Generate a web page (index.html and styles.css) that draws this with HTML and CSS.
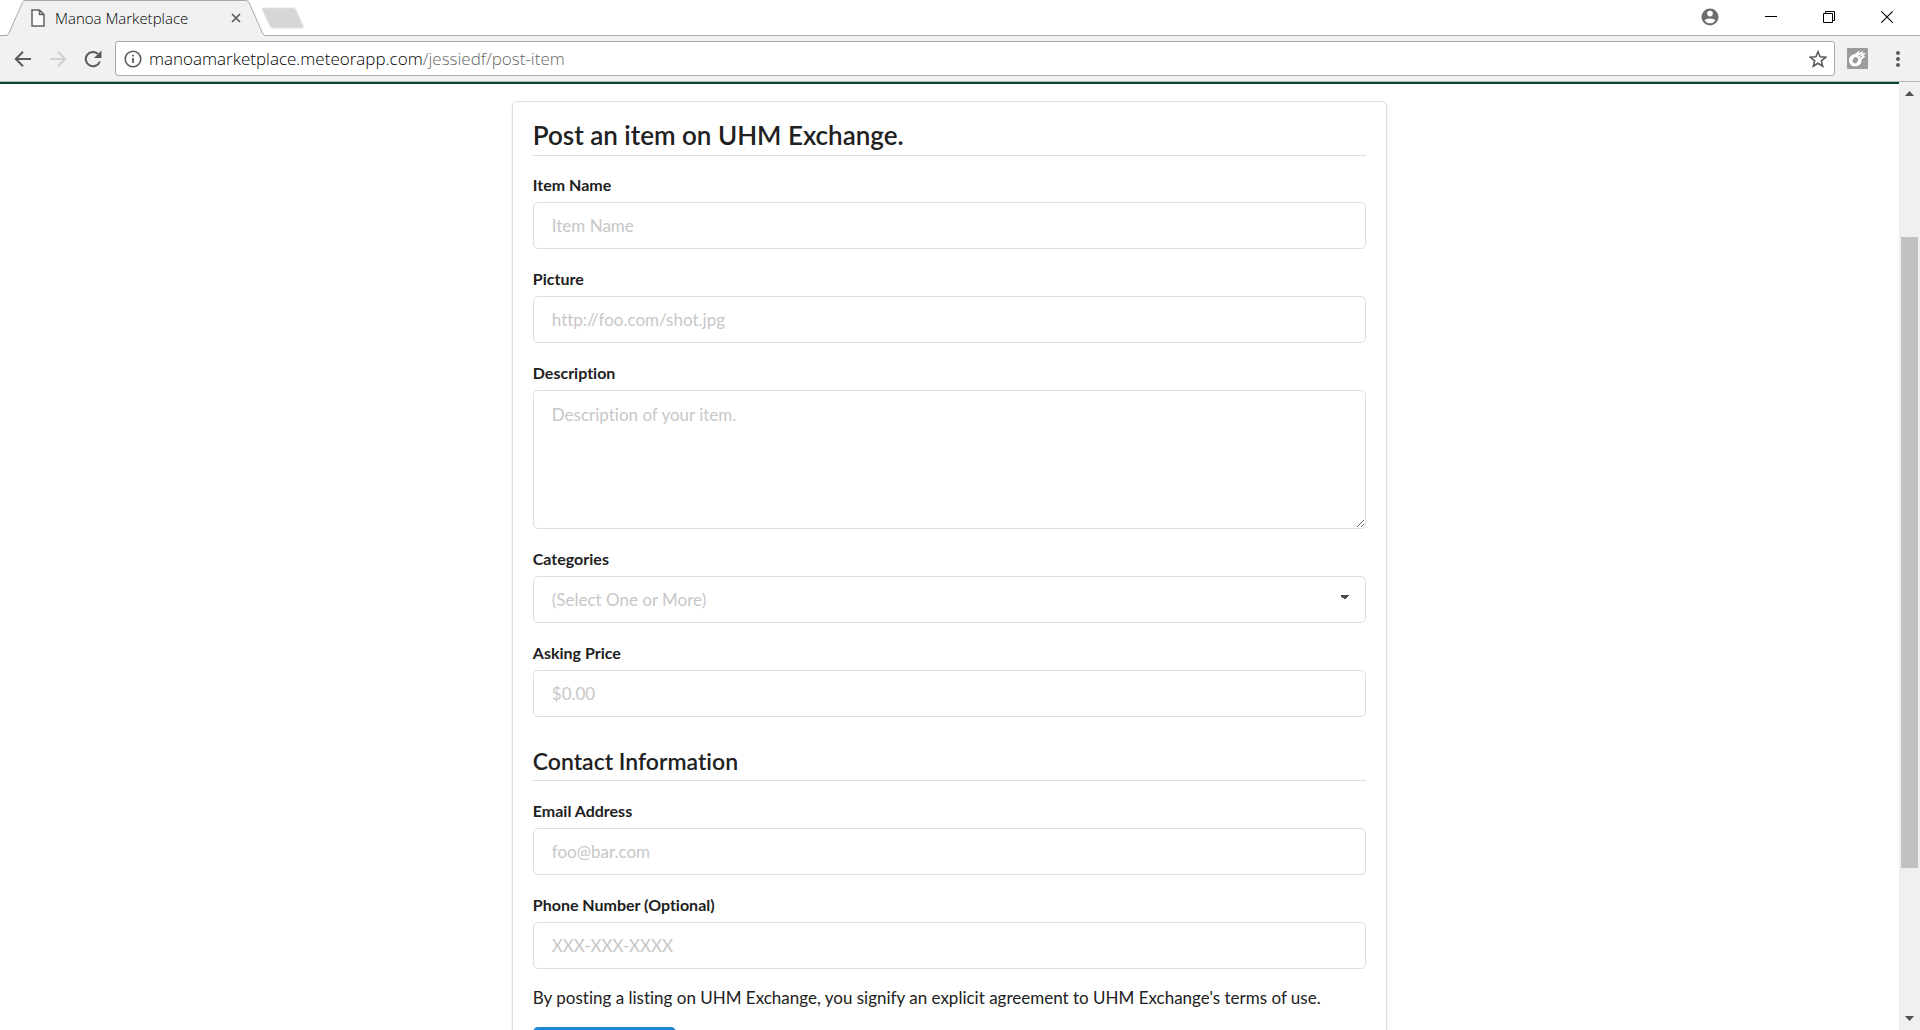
FILE: index.html
```html
<!DOCTYPE html>
<html lang="en">
<head>
<meta charset="utf-8">
<title>Manoa Marketplace</title>
<link rel="stylesheet" href="styles.css">
</head>
<body>
<header class="chrome">
  <div class="tab-strip">
    <div class="tab">
      <svg class="tab-shape" width="272" height="36" viewBox="0 0 272 36" aria-hidden="true"><path d="M0 35.5H6Q8 35.5 9 33L22.500 2.500Q23.200.5 25 .5H246Q248 .5 249 2.500L262.500 33Q263.500 35.500 265.500 35.500H272V36H0Z" fill="#f1f1f1"/><path d="M0 35.500H6Q8 35.500 9 33L22.500 2.500Q23.200.5 25 .5H246Q248 .5 249 2.500L262.500 33Q263.500 35.500 265.500 35.500H272" fill="none" stroke="#a9a9a9"/></svg>
      <svg class="tab-icon" width="14" height="18" viewBox="0 0 14 18" aria-hidden="true"><path d="M1 1H8.500L13 5.500V17H1ZM8.500 1V5.500H13" fill="#fafafa" stroke="#616161" stroke-width="1.500"/></svg>
      <span class="tab-title">Manoa Marketplace</span>
      <button class="icon-button tab-close" type="button" aria-label="Close tab"><svg width="10" height="10" viewBox="0 0 10 10"><path d="M1 1L9 9M9 1L1 9" stroke="#5a5a5a" stroke-width="1.700"/></svg></button>
    </div>
    <button class="icon-button" type="button" aria-label="New tab"><svg width="44" height="22" viewBox="0 0 44 22"><path d="M2.500 1H32Q34 1 35 3L42 18.500Q43 21 41 21H12Q10 21 9 19L1.500 3Q1 1 2.500 1Z" fill="#d6d6d6" stroke="#e2e2e2"/></svg></button>
    <div class="window-controls">
      <button class="icon-button profile" type="button" aria-label="Profile"><svg width="18" height="18" viewBox="0 0 18 18"><circle cx="9" cy="9" r="8.500" fill="#6e6e6e"/><circle cx="9" cy="5.600" r="2.800" fill="#fff"/><path d="M3.600 12.600C4.500 9.700 13.500 9.700 14.400 12.600Q12.500 15.300 9 15.300T3.600 12.600Z" fill="#fff"/></svg></button>
      <button class="icon-button caption" type="button" aria-label="Minimize"><svg width="12" height="12" viewBox="0 0 12 12"><path d="M0 5.500H12" stroke="#000"/></svg></button>
      <button class="icon-button caption" type="button" aria-label="Restore"><svg width="12" height="12" viewBox="0 0 12 12"><path d="M.5 2.500H9.500V11.500H.5ZM2.500 2.500V.5H11.500V9.500H9.500" fill="none" stroke="#000"/></svg></button>
      <button class="icon-button caption" type="button" aria-label="Close"><svg width="12" height="12" viewBox="0 0 12 12"><path d="M.3.3L11.700 11.700M11.700.3L.3 11.700" stroke="#000" stroke-width="1.100"/></svg></button>
    </div>
  </div>
  <div class="toolbar">
    <nav class="nav-buttons" aria-label="Browser">
      <button class="icon-button" type="button" aria-label="Back"><svg width="18" height="18" viewBox="0 0 18 18"><path d="M17 9H2M9 1.700L1.800 9L9 16.300" fill="none" stroke="#5a5a5a" stroke-width="2"/></svg></button>
      <button class="icon-button" type="button" aria-label="Forward"><svg width="18" height="18" viewBox="0 0 18 18"><path d="M1 9H16M9 1.700L16.200 9L9 16.300" fill="none" stroke="#d0d0d0" stroke-width="2"/></svg></button>
      <button class="icon-button" type="button" aria-label="Reload"><svg width="18" height="18" viewBox="0 0 18 18"><path d="M15.800 11.500A7.200 7.200 0 1 1 14 3.900" fill="none" stroke="#5a5a5a" stroke-width="2"/><path d="M17.500.5V8H10Z" fill="#5a5a5a"/></svg></button>
    </nav>
    <div class="omnibox">
      <svg width="18" height="18" viewBox="0 0 18 18" aria-hidden="true"><circle cx="9" cy="9" r="7.800" fill="none" stroke="#5a5a5a" stroke-width="1.600"/><path d="M9 8V13M9 4.800V6.500" stroke="#5a5a5a" stroke-width="1.800"/></svg>
      <div class="url">manoamarketplace.meteorapp.com<span class="url-path">/jessiedf/post-item</span></div>
      <button class="icon-button" type="button" aria-label="Bookmark"><svg width="18" height="18" viewBox="0 0 18 18"><path d="M9 1.800L11.100 6.800L16.600 7.300L12.400 10.900L13.700 16.200L9 13.300L4.300 16.200L5.600 10.900L1.400 7.300L6.900 6.800Z" fill="none" stroke="#5a5a5a" stroke-width="1.600"/></svg></button>
    </div>
    <button class="icon-button" type="button" aria-label="Extension"><svg width="21" height="21" viewBox="0 0 21 21"><rect width="21" height="21" rx="1" fill="#9b9b9b"/><path d="M2 12.500C2 9 4.500 6.500 8 6L12.500 2.300L11.800 5.300L16.500 2.500L15 5.500L19 5L16.500 8L18.500 8.500L14.500 11.500C15 16 12 18.300 8.300 18.300C4.500 18.300 2 16 2 12.500Z" fill="#fff"/><ellipse cx="8.300" cy="12.300" rx="2.600" ry="3.200" transform="rotate(30 8.300 12.300)" fill="#9b9b9b"/><path d="M11 8.500L14 6.200M12.500 10L15.500 7.800" stroke="#9b9b9b"/></svg></button>
    <button class="icon-button" type="button" aria-label="Menu"><svg width="6" height="18" viewBox="0 0 6 18"><g fill="#5a5a5a"><circle cx="3" cy="3" r="2"/><circle cx="3" cy="9" r="2"/><circle cx="3" cy="15" r="2"/></g></svg></button>
  </div>
</header>
<div class="viewport">
  <main class="page">
    <form class="segment">
      <h2 class="title">Post an item on UHM Exchange.</h2>
      <div class="field"><label for="name">Item Name</label><input class="control" id="name" type="text" placeholder="Item Name"></div>
      <div class="field"><label for="picture">Picture</label><input class="control" id="picture" type="text" placeholder="http://foo.com/shot.jpg"></div>
      <div class="field"><label for="description">Description</label><textarea class="control" id="description" placeholder="Description of your item."></textarea></div>
      <div class="field"><label for="categories">Categories</label><select class="control" id="categories"><option>(Select One or More)</option></select></div>
      <div class="field"><label for="price">Asking Price</label><input class="control" id="price" type="text" placeholder="$0.00"></div>
      <h3 class="subtitle">Contact Information</h3>
      <div class="field"><label for="email">Email Address</label><input class="control" id="email" type="text" placeholder="foo@bar.com"></div>
      <div class="field"><label for="phone">Phone Number (Optional)</label><input class="control" id="phone" type="text" placeholder="XXX-XXX-XXXX"></div>
      <p class="terms">By posting a listing on UHM Exchange, you signify an explicit agreement to UHM Exchange's terms of use.</p>
      <button class="submit" type="submit" aria-label="Post item"></button>
    </form>
  </main>
  <div class="scrollbar" aria-hidden="true">
    <svg width="9" height="5" viewBox="0 0 9 5"><path d="M0 5L4.500 0L9 5Z" fill="#505050"/></svg>
    <div class="track"><div class="thumb"></div></div>
    <svg width="9" height="5" viewBox="0 0 9 5"><path d="M0 0L4.500 5L9 0Z" fill="#505050"/></svg>
  </div>
</div>
</body>
</html>
```
FILE: styles.css
```css
* { box-sizing: border-box; }
body {
  margin: 0;
  height: 100vh;
  display: flex;
  flex-direction: column;
  overflow: hidden;
  background: #fff;
  color: #212121;
  font: 17px/26px Lato, "Liberation Sans", sans-serif;
  font-variant-ligatures: none;
}
svg { display: block; flex: none; }
.icon-button { padding: 0; border: 0; background: none; flex: none; }

/* Browser frame */
.chrome { flex: none; color: #000; font-family: "Open Sans", "Noto Sans", sans-serif; font-weight: 300; }
.tab-strip {
  display: flex;
  height: 36px;
  align-items: center;
  background: linear-gradient(#a9a9a9, #a9a9a9) bottom / 100% 1px no-repeat;
}
.tab {
  position: relative;
  display: flex;
  align-items: center;
  width: 261px;
  height: 36px;
  padding: 0 20px 0 31px;
}
.tab-shape { position: absolute; left: 0; top: 0; }
.tab-icon, .tab-title, .tab-close { position: relative; }
.tab-title { flex: 1; margin-left: 10px; font-size: 15px; line-height: 20px; white-space: nowrap; }
.window-controls { display: flex; align-items: center; gap: 46px; margin-left: auto; padding: 0 27px 2px 0; }
.toolbar {
  display: flex;
  align-items: center;
  gap: 12px;
  height: 46px;
  padding: 0 19px 0 14px;
  background: #f1f1f1;
  border-bottom: 1px solid #b6b4b6;
}
.nav-buttons { display: flex; gap: 17px; padding-right: 1px; }
.omnibox {
  flex: 1;
  display: flex;
  align-items: center;
  height: 35px;
  padding: 0 7px 0 8px;
  background: #fff;
  border: 1px solid #a9a9a9;
  border-radius: 3px;
}
.url { flex: 1; margin-left: 7px; font-size: 17px; line-height: 24px; }
.url-path { color: #666; }
.toolbar > .icon-button:last-child { margin-left: 15px; }

/* Page */
.viewport { flex: 1; display: flex; min-height: 0; }
.page { flex: 1; overflow: hidden; border-top: 2px solid #024731; padding-top: 17px; }
.segment {
  width: 46.1%;
  min-width: 500px;
  margin: 0 auto;
  padding: 19px 20px 20px;
  border: 1px solid #dededf;
  border-radius: 5px;
  box-shadow: 0 1px 2px rgba(34, 36, 38, .15);
}
.title, .subtitle { border-bottom: 1px solid #dededf; font-weight: 600; }
.title { margin: 0 0 19px; font-size: 26px; line-height: 28px; padding-bottom: 6px; }
.subtitle { margin: 30px 0 20px; font-size: 23px; line-height: 28px; padding-bottom: 5px; }
.field { margin-bottom: 20px; }
.field label { display: block; margin-bottom: 7px; font-size: 16px; line-height: 20px; font-weight: 700; }
.control {
  display: block;
  width: 100%;
  height: 47px;
  margin: 0;
  padding: 0 18px;
  background: #fff;
  border: 1px solid #dededf;
  border-radius: 5px;
  color: #212121;
  font: 17px/22px Lato, "Liberation Sans", sans-serif;
  font-variant-ligatures: none;
}
.control::placeholder { color: #c7c7c7; opacity: 1; }
textarea.control { height: 139px; padding-top: 13px; resize: vertical; }
select.control {
  appearance: none;
  color: #c7c7c7;
  background: linear-gradient(to bottom right, #4a4a4a 50%, transparent 50%) right 15px top 18px / 5px 5px no-repeat,
    linear-gradient(to bottom left, #4a4a4a 50%, transparent 50%) right 20px top 18px / 5px 5px no-repeat;
}
.terms { margin: -4px 0 16px; }
.submit { display: block; width: 143px; height: 45px; padding: 0; border: 0; border-radius: 5px; background: #2185d0; }

/* Scrollbar */
.scrollbar {
  display: flex;
  flex-direction: column;
  align-items: center;
  width: 21px;
  padding: 9px 0;
  background: #f0f0f0;
}
.track { flex: 1; width: 17px; padding: 141px 0 10px; }
.thumb { height: 82%; background: #c1c1c1; }
```
